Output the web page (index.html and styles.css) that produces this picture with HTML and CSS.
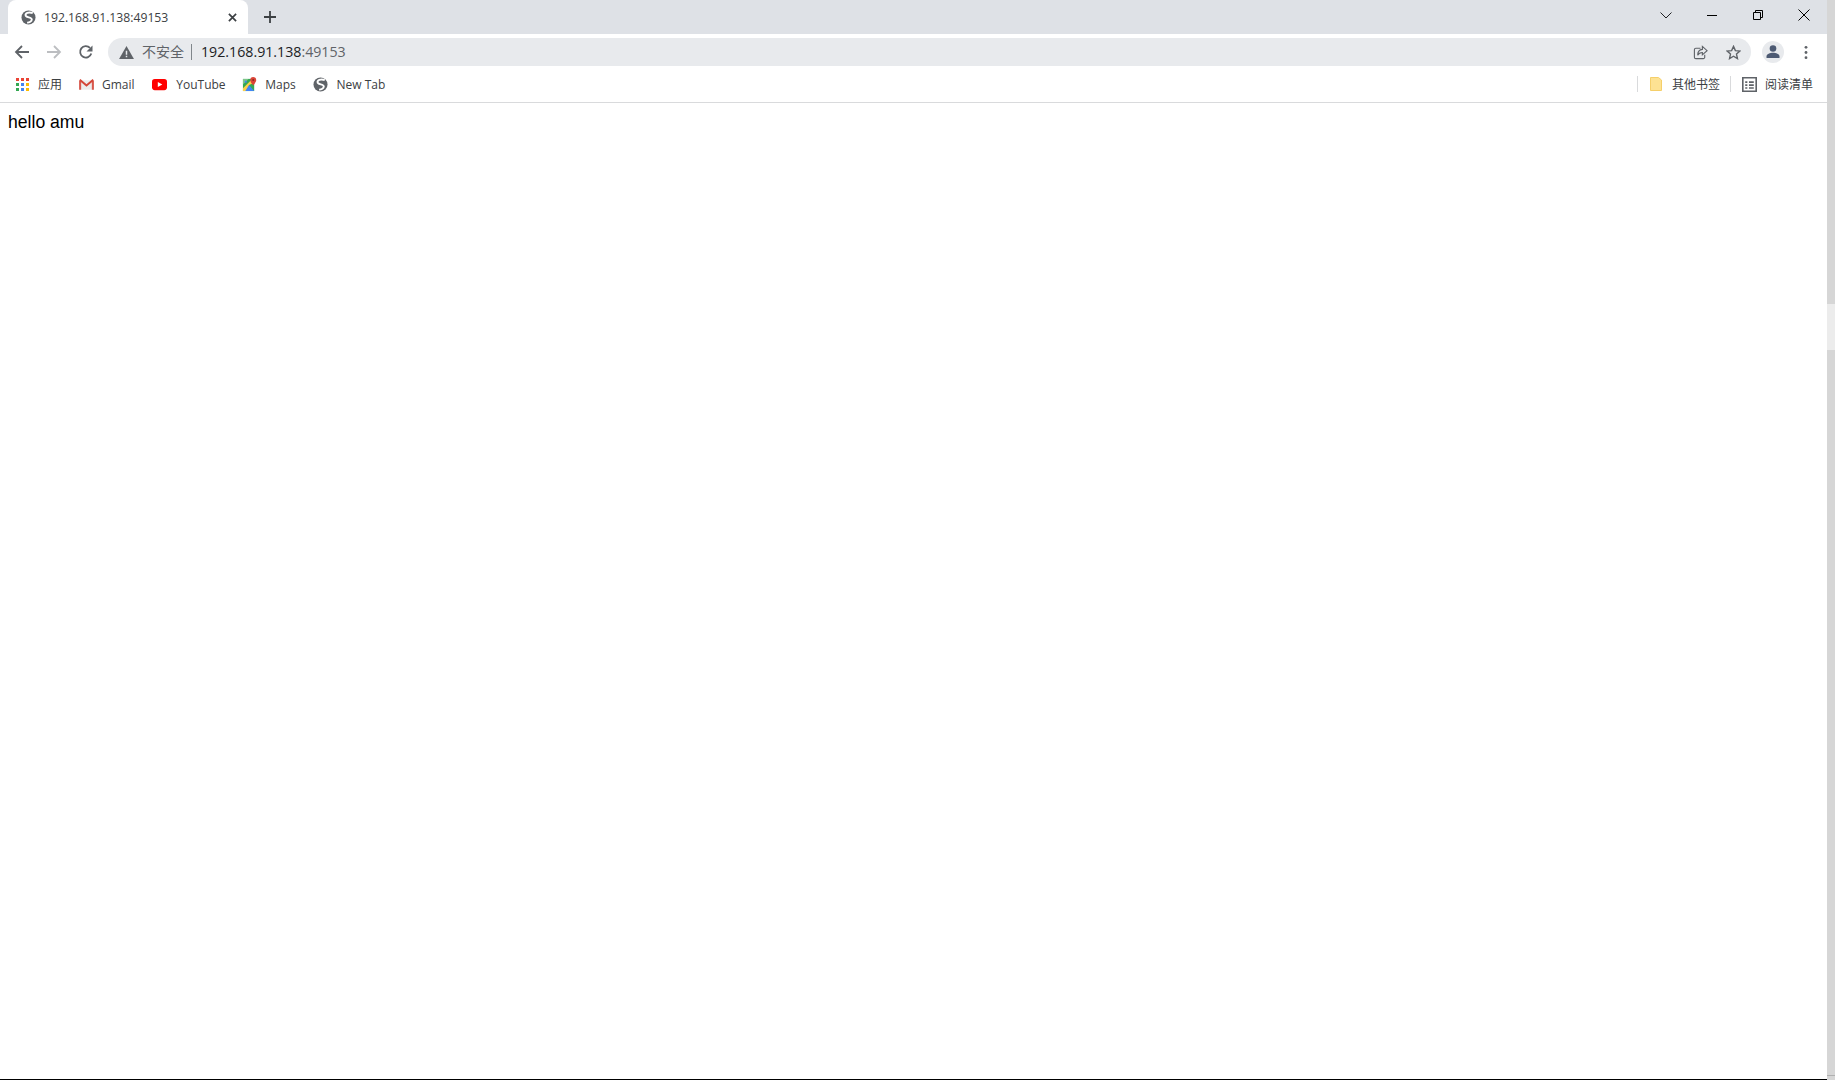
FILE: index.html
```html
<!DOCTYPE html>
<html lang="zh">
<head>
<meta charset="utf-8">
<title>192.168.91.138:49153</title>
<link rel="stylesheet" href="styles.css">
</head>
<body>
<div class="screen">
  <div class="browser">
    <header class="tabstrip">
      <div class="tab">
        <svg class="globe" viewBox="0 0 16 16"><circle cx="8" cy="8" r="7.500" fill="#5f6368"/><path d="M12.500 3.200C8 1.800 4 3.300 5 6.200 6.200 8.400 11.400 7.200 11.500 10 11.500 12 9 13.500 6.500 13.400" stroke="#fff" stroke-width="2" fill="none"/></svg>
        <span class="tab-title">192.168.91.138:49153</span>
        <svg class="tab-close" viewBox="0 0 10 10"><path d="M1 1l8 8M9 1l-8 8" stroke="#3c4043" stroke-width="1.900" fill="none"/></svg>
      </div>
      <svg class="new-tab" viewBox="0 0 14 14"><path d="M7 1v12M1 7h12" stroke="#3c4043" stroke-width="1.800" fill="none"/></svg>
      <div class="window-controls">
        <span class="wc"><svg viewBox="0 0 12 12" width="12" height="12"><path d="M.5 3.500 6 9l5.500-5.500" stroke="#202124" fill="none"/></svg></span>
        <span class="wc"><svg viewBox="0 0 12 12" width="12" height="12"><path d="M1 6.500h10" stroke="#000" fill="none"/></svg></span>
        <span class="wc"><svg viewBox="0 0 12 12" width="12" height="12"><path d="M1.500 3.500h7v7h-7zM3.500 3.500v-2h7v7h-2" stroke="#000" fill="none"/></svg></span>
        <span class="wc"><svg viewBox="0 0 12 12" width="12" height="12"><path d="M.5.500l11 11M11.500.500l-11 11" stroke="#000" fill="none"/></svg></span>
      </div>
    </header>

    <nav class="toolbar">
      <svg class="nav-btn" viewBox="0 0 16 16"><path d="M15 8H2.500M8 2 2 8l6 6" stroke="#5f6368" stroke-width="1.800" fill="none"/></svg>
      <svg class="nav-btn" viewBox="0 0 16 16"><path d="M1 8h12.500M8 2l6 6-6 6" stroke="#bcbec1" stroke-width="1.800" fill="none"/></svg>
      <svg class="nav-btn" viewBox="0 0 16 16"><path d="M13.300 9.500A5.700 5.700 0 1 1 12 3.900" stroke="#5f6368" stroke-width="1.800" fill="none"/><path d="M14.500 1.500v6h-6z" fill="#5f6368"/></svg>
      <div class="omnibox">
        <svg class="warn" viewBox="0 0 16 14"><path d="M8 0 16 14H0z" fill="#5f6368"/><path d="M7.200 5h1.600v4.500H7.200zM7.200 10.500h1.600V12H7.200z" fill="#e8eaed"/></svg>
        <span class="insecure">不安全</span>
        <span class="chip-sep"></span>
        <span class="url">192.168.91.138<span class="url-port">:49153</span></span>
        <svg class="omni-icon share" viewBox="0 0 16 16"><path d="M8 3.500H3A1.500 1.500 0 0 0 1.500 5v8A1.500 1.500 0 0 0 3 14.500h8a1.500 1.500 0 0 0 1.500-1.500v-2.500" stroke="#5f6368" stroke-width="1.200" fill="none"/><path d="M10 1.500 15 6l-5 4.500V8C7.500 8 6 9 5 11c0-3.500 2-6 5-6.300z" stroke="#5f6368" stroke-width="1.200" fill="#e8eaed"/></svg>
        <svg class="omni-icon star" viewBox="0 0 16 16"><path d="m8 1.500 2 4.500 4.800.5-3.600 3.200 1 4.800L8 12l-4.200 2.500 1-4.800L1.200 6.500 6 6z" stroke="#5f6368" stroke-width="1.500" fill="none"/></svg>
      </div>
      <span class="avatar"><svg viewBox="0 0 16 16" width="16" height="16"><circle cx="8" cy="4.500" r="3.300" fill="#4d5a73"/><path d="M1.500 14v-1.500c0-2.500 3.500-3.700 6.500-3.700s6.500 1.200 6.500 3.700V14z" fill="#4d5a73"/></svg></span>
      <svg class="menu" viewBox="0 0 4 16"><circle cx="2" cy="2.500" r="1.500" fill="#5f6368"/><circle cx="2" cy="8" r="1.500" fill="#5f6368"/><circle cx="2" cy="13.500" r="1.500" fill="#5f6368"/></svg>
    </nav>

    <div class="bookmarks">
      <a class="bm bm-apps">
        <svg class="bm-icon" viewBox="0 0 13 13">
          <rect x="0" y="0" width="3" height="3" fill="#ea4335"/><rect x="5" y="0" width="3" height="3" fill="#ea4335"/><rect x="10" y="0" width="3" height="3" fill="#ea4335"/>
          <rect x="0" y="5" width="3" height="3" fill="#34a853"/><rect x="5" y="5" width="3" height="3" fill="#4285f4"/><rect x="10" y="5" width="3" height="3" fill="#fbbc04"/>
          <rect x="0" y="10" width="3" height="3" fill="#34a853"/><rect x="5" y="10" width="3" height="3" fill="#4285f4"/><rect x="10" y="10" width="3" height="3" fill="#fbbc04"/>
        </svg>
        <span>应用</span>
      </a>
      <a class="bm bm-gmail">
        <svg class="bm-icon" viewBox="0 0 16 12"><path d="M1 1.500h14v10H1z" fill="#ececec"/><path d="M1.200 11.500V2.200M14.800 11.500V2.200" stroke="#d8584d" stroke-width="2.200" fill="none"/><path d="M.8 1 8 7l7.200-6" stroke="#d44638" stroke-width="2.200" fill="none"/></svg>
        <span>Gmail</span>
      </a>
      <a class="bm bm-wide">
        <svg class="bm-icon" viewBox="0 0 16 12"><rect width="16" height="12" rx="3" fill="#f00"/><path d="M6.200 3.300 11 6l-4.800 2.700z" fill="#fff"/></svg>
        <span>YouTube</span>
      </a>
      <a class="bm">
        <svg class="bm-icon" viewBox="0 0 16 16"><path d="M1 2h12v13H1z" fill="#34a853"/><path d="M1 2h6L1 8z" fill="#7dc68a"/><path d="M3 4h2v2H3z" fill="#4285f4"/><path d="M1 15 7.500 8.500 13 15z" fill="#4285f4"/><path d="M1 15V12L11 2h2v4L7.500 8.500 3.500 15z" fill="#fbd04b"/><path d="M12 0a3.200 3.200 0 0 0-3.200 3.200C8.800 5.400 12 9 12 9s3.200-3.600 3.200-5.800A3.200 3.200 0 0 0 12 0z" fill="#db4437"/><circle cx="12" cy="3.200" r="1.100" fill="#8c2a20"/></svg>
        <span>Maps</span>
      </a>
      <a class="bm bm-wide">
        <svg class="bm-icon" viewBox="0 0 16 16"><circle cx="8" cy="8" r="7.500" fill="#5f6368"/><path d="M12.500 3.200C8 1.800 4 3.300 5 6.200 6.200 8.400 11.400 7.200 11.500 10 11.500 12 9 13.500 6.500 13.400" stroke="#fff" stroke-width="2" fill="none"/></svg>
        <span>New Tab</span>
      </a>
      <span class="bm-spacer"></span>
      <span class="bm-sep"></span>
      <a class="bm bm-right">
        <svg class="folder" viewBox="0 0 12 14"><path d="M.5.500h8l3 2.500v10.500H.5z" fill="#fde293" stroke="#f5cf6a"/></svg>
        <span>其他书签</span>
      </a>
      <span class="bm-sep"></span>
      <a class="bm bm-right">
        <svg class="list" viewBox="0 0 14 14"><path d="M.75.750h12.500v12.500H.75z" stroke="#5f6368" stroke-width="1.500" fill="none"/><path d="M3 4h2v1.500H3zM6.500 4H11v1.500H6.500zM3 6.800h2v1.500H3zM6.500 6.800H11v1.500H6.500zM3 9.500h2V11H3zM6.500 9.500H11V11H6.500z" fill="#5f6368"/></svg>
        <span>阅读清单</span>
      </a>
    </div>

    <main class="page">hello amu</main>
    <div class="taskbar-edge"></div>
  </div>
  <aside class="scrollbar">
    <div class="thumb"></div>
    <div class="scroll-end"></div>
  </aside>
</div>
</body>
</html>
```

FILE: styles.css
```css
* { box-sizing: border-box; }
html, body { margin: 0; height: 100%; overflow: hidden; background: #fff; }
body { font-family: "Open Sans", "Noto Sans CJK SC", sans-serif; color: #3c4043; }

.screen { display: grid; grid-template-columns: 1fr 8px; width: 1835px; height: 1080px; }
.browser { display: flex; flex-direction: column; min-width: 0; }

.tabstrip { display: flex; align-items: stretch; height: 34px; background: #dee1e6; padding-left: 8px; flex: none; }
.tab { display: flex; align-items: center; width: 240px; padding: 0 11px 0 13px; background: #fff; border-radius: 8px 8px 0 0; }
.globe { width: 15px; height: 15px; flex: none; }
.tab-title { margin-left: 8px; flex: 1; font-size: 12.2px; color: #3c4043; white-space: nowrap; }
.tab-close { width: 9px; height: 9px; flex: none; }
.new-tab { width: 14px; height: 14px; align-self: center; margin-left: 15px; }
.window-controls { display: flex; margin-left: auto; }
.wc { width: 46px; display: flex; align-items: center; justify-content: center; padding-bottom: 4px; }

.toolbar { display: flex; align-items: center; height: 34px; flex: none; padding: 2px 0 0 14px; }
.nav-btn { width: 16px; height: 16px; margin-right: 16px; flex: none; }
.nav-btn:nth-child(3) { margin-right: 14px; }
.omnibox { display: flex; align-items: center; height: 28px; width: 1643px; background: #e8eaed; border-radius: 14px; padding: 0 10px 0 11px; flex: none; }
.warn { width: 15px; height: 13px; flex: none; }
.insecure { margin-left: 8px; padding-bottom: 2px; font-size: 14px; color: #5f6368; }
.chip-sep { width: 1px; height: 16px; margin: 0 9px 0 7px; background: #80868b; }
.url { padding-bottom: 2px; font-size: 14.2px; color: #202124; flex: 1; }
.url-port { color: #5f6368; }
.omni-icon { width: 15px; height: 15px; flex: none; }
.share { margin-right: 18px; }
.avatar { display: flex; align-items: center; justify-content: center; width: 22px; height: 22px; margin-left: 11px; border-radius: 50%; background: #e8eaed; flex: none; overflow: hidden; }
.menu { width: 4px; height: 15px; margin-left: 20px; flex: none; }

.bookmarks { display: flex; align-items: center; height: 35px; flex: none; padding: 0 14px 2px 16px; border-bottom: 1px solid #d9dadc; font-size: 12px; color: #3c4043; }
.bm { display: flex; align-items: center; margin-right: 16.7px; white-space: nowrap; }
.bm-icon { width: 15px; height: 15px; margin-right: 8px; flex: none; }
.bm-wide .bm-icon { margin-right: 9px; }
.bm-apps { margin-right: 17px; }
.bm-gmail { margin-right: 17.7px; }
.bm-apps .bm-icon { width: 13px; height: 13px; margin-right: 9px; }
.bm-spacer { flex: 1; }
.bm-sep { width: 1px; height: 16px; background: #d9dadc; flex: none; }
.bm-right { margin: 0 0 0 12px; }
.bm-right + .bm-sep { margin-left: 10px; }
.bm-right:last-child { margin-left: 11px; }
.folder { width: 12px; height: 14px; margin-right: 10px; flex: none; }
.list { width: 15px; height: 15px; margin-right: 8px; flex: none; }

.page { flex: 1; padding: 7px 8px; font-family: "Liberation Sans", sans-serif; font-size: 17.6px; line-height: 24px; color: #000; }
.taskbar-edge { height: 1px; background: #000; flex: none; }

.scrollbar { display: flex; flex-direction: column; background: #d6d6d6; }
.thumb { height: 46px; margin-top: 304px; background: #ececec; }
.scroll-end { height: 1px; margin-top: auto; margin-bottom: 4px; background: #b0b0b0; }
```
